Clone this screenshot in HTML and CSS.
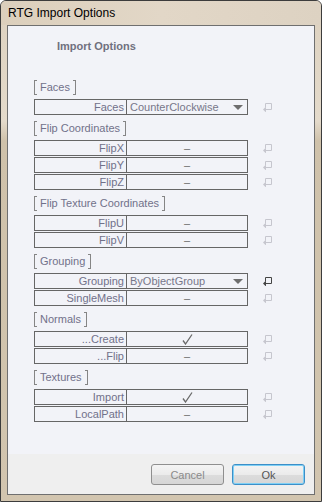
FILE: index.html
```html
<!DOCTYPE html>
<html lang="en">
<head>
  <meta charset="UTF-8">
  <title>RTG Import Options</title>
  <link rel="stylesheet" href="styles.css">
</head>
<body>
  <div class="window">
    <div class="titlebar">RTG Import Options</div>
    <div class="client">
      <div class="content">
        <div class="heading">Import Options</div>

        <div class="group">
          <div class="group-title"><span class="br-l"></span><span class="gt">Faces</span><span class="br-r"></span></div>
          <div class="row">
            <div class="field"><div class="label">Faces</div><div class="value combo">CounterClockwise<svg class="arrow" width="10" height="5" viewBox="0 0 10 5"><path d="M0 0H10L5 5Z" fill="#6e6e6e"/></svg></div></div>
            <svg class="reset" width="10" height="10" viewBox="0 0 10 10"><path d="M2.5 5V1.5H8.5V7.5H3" fill="none" stroke="currentColor"/><path d="M0 7.5L3 4.5V10.5Z" fill="currentColor"/></svg>
          </div>
        </div>

        <div class="group">
          <div class="group-title"><span class="br-l"></span><span class="gt">Flip Coordinates</span><span class="br-r"></span></div>
          <div class="row">
            <div class="field"><div class="label">FlipX</div><div class="value">–</div></div>
            <svg class="reset" width="10" height="10" viewBox="0 0 10 10"><path d="M2.5 5V1.5H8.5V7.5H3" fill="none" stroke="currentColor"/><path d="M0 7.5L3 4.5V10.5Z" fill="currentColor"/></svg>
          </div>
          <div class="row">
            <div class="field"><div class="label">FlipY</div><div class="value">–</div></div>
            <svg class="reset" width="10" height="10" viewBox="0 0 10 10"><path d="M2.5 5V1.5H8.5V7.5H3" fill="none" stroke="currentColor"/><path d="M0 7.5L3 4.5V10.5Z" fill="currentColor"/></svg>
          </div>
          <div class="row">
            <div class="field"><div class="label">FlipZ</div><div class="value">–</div></div>
            <svg class="reset" width="10" height="10" viewBox="0 0 10 10"><path d="M2.5 5V1.5H8.5V7.5H3" fill="none" stroke="currentColor"/><path d="M0 7.5L3 4.5V10.5Z" fill="currentColor"/></svg>
          </div>
        </div>

        <div class="group">
          <div class="group-title"><span class="br-l"></span><span class="gt">Flip Texture Coordinates</span><span class="br-r"></span></div>
          <div class="row">
            <div class="field"><div class="label">FlipU</div><div class="value">–</div></div>
            <svg class="reset" width="10" height="10" viewBox="0 0 10 10"><path d="M2.5 5V1.5H8.5V7.5H3" fill="none" stroke="currentColor"/><path d="M0 7.5L3 4.5V10.5Z" fill="currentColor"/></svg>
          </div>
          <div class="row">
            <div class="field"><div class="label">FlipV</div><div class="value">–</div></div>
            <svg class="reset" width="10" height="10" viewBox="0 0 10 10"><path d="M2.5 5V1.5H8.5V7.5H3" fill="none" stroke="currentColor"/><path d="M0 7.5L3 4.5V10.5Z" fill="currentColor"/></svg>
          </div>
        </div>

        <div class="group">
          <div class="group-title"><span class="br-l"></span><span class="gt">Grouping</span><span class="br-r"></span></div>
          <div class="row">
            <div class="field"><div class="label">Grouping</div><div class="value combo">ByObjectGroup<svg class="arrow" width="10" height="5" viewBox="0 0 10 5"><path d="M0 0H10L5 5Z" fill="#6e6e6e"/></svg></div></div>
            <svg class="reset active" width="10" height="10" viewBox="0 0 10 10"><path d="M2.5 5V1.5H8.5V7.5H3" fill="none" stroke="currentColor"/><path d="M0 7.5L3 4.5V10.5Z" fill="currentColor"/></svg>
          </div>
          <div class="row">
            <div class="field"><div class="label">SingleMesh</div><div class="value">–</div></div>
            <svg class="reset" width="10" height="10" viewBox="0 0 10 10"><path d="M2.5 5V1.5H8.5V7.5H3" fill="none" stroke="currentColor"/><path d="M0 7.5L3 4.5V10.5Z" fill="currentColor"/></svg>
          </div>
        </div>

        <div class="group">
          <div class="group-title"><span class="br-l"></span><span class="gt">Normals</span><span class="br-r"></span></div>
          <div class="row">
            <div class="field"><div class="label">...Create</div><div class="value"><svg class="check" width="11" height="11" viewBox="0 0 11 11"><path d="M1 6.5L3.5 10L10 0.5" fill="none" stroke="#6a6a6a" stroke-width="1.3"/></svg></div></div>
            <svg class="reset" width="10" height="10" viewBox="0 0 10 10"><path d="M2.5 5V1.5H8.5V7.5H3" fill="none" stroke="currentColor"/><path d="M0 7.5L3 4.5V10.5Z" fill="currentColor"/></svg>
          </div>
          <div class="row">
            <div class="field"><div class="label">...Flip</div><div class="value">–</div></div>
            <svg class="reset" width="10" height="10" viewBox="0 0 10 10"><path d="M2.5 5V1.5H8.5V7.5H3" fill="none" stroke="currentColor"/><path d="M0 7.5L3 4.5V10.5Z" fill="currentColor"/></svg>
          </div>
        </div>

        <div class="group">
          <div class="group-title"><span class="br-l"></span><span class="gt">Textures</span><span class="br-r"></span></div>
          <div class="row">
            <div class="field"><div class="label">Import</div><div class="value"><svg class="check" width="11" height="11" viewBox="0 0 11 11"><path d="M1 6.5L3.5 10L10 0.5" fill="none" stroke="#6a6a6a" stroke-width="1.3"/></svg></div></div>
            <svg class="reset" width="10" height="10" viewBox="0 0 10 10"><path d="M2.5 5V1.5H8.5V7.5H3" fill="none" stroke="currentColor"/><path d="M0 7.5L3 4.5V10.5Z" fill="currentColor"/></svg>
          </div>
          <div class="row">
            <div class="field"><div class="label">LocalPath</div><div class="value">–</div></div>
            <svg class="reset" width="10" height="10" viewBox="0 0 10 10"><path d="M2.5 5V1.5H8.5V7.5H3" fill="none" stroke="currentColor"/><path d="M0 7.5L3 4.5V10.5Z" fill="currentColor"/></svg>
          </div>
        </div>
      </div>

      <div class="buttons">
        <button class="btn">Cancel</button>
        <button class="btn default">Ok</button>
      </div>
    </div>
  </div>
</body>
</html>
```

FILE: styles.css
```css
body {
  margin: 0;
  font-family: "Liberation Sans", Arial, sans-serif;
  background: #fff;
}
.window {
  width: 322px;
  height: 502px;
  box-sizing: border-box;
  border: 1px solid #3c3c3c;
  border-radius: 6px 6px 0 0;
  background: linear-gradient(to bottom, #ddd1bf 0, #e4dacb 120px, #cfc1aa 140px, #d2c5af 100%);
  display: flex;
  flex-direction: column;
}
.titlebar {
  height: 24px;
  line-height: 24px;
  padding-left: 7px;
  font-size: 12px;
  color: #000;
  background: linear-gradient(to right, #dccfbc, #e2d7c7 50%, #ddd2c2);
  border-radius: 5px 5px 0 0;
}
.client {
  flex: 1;
  margin: 0 6px 6px 6px;
  border: 1px solid #6f6f6f;
  background: #f2f3f8;
  display: flex;
  flex-direction: column;
}
.content {
  flex: 1;
  padding-left: 26px;
}
.heading {
  margin-top: 13px;
  margin-left: 23px;
  line-height: 14px;
  font-size: 11px;
  font-weight: bold;
  color: #70707e;
  margin-bottom: 27px;
}
.group {
  margin-bottom: 6px;
}
.group-title {
  display: flex;
  height: 15px;
  margin-bottom: 4px;
}
.br-l, .br-r {
  width: 3px;
  box-sizing: border-box;
  border: 1px solid #858585;
}
.br-l {
  border-right: none;
}
.br-r {
  border-left: none;
}
.gt {
  line-height: 15px;
  font-size: 11px;
  color: #71718a;
  padding: 0 3px;
}
.row {
  display: flex;
  align-items: center;
  margin-bottom: 1px;
}
.field {
  display: flex;
  width: 214px;
  height: 16px;
  box-sizing: border-box;
  border: 1px solid #666;
  font-size: 11px;
  line-height: 14px;
  color: #71718a;
}
.label {
  width: 92px;
  box-sizing: border-box;
  border-right: 1px solid #666;
  text-align: right;
  padding-right: 2px;
}
.value {
  flex: 1;
  display: flex;
  justify-content: center;
  align-items: center;
  color: #6a6a6a;
}
.value.combo {
  justify-content: space-between;
  padding: 0 4px 0 3px;
  color: #77778a;
}
.arrow {
  display: block;
}
.check {
  display: block;
}
.reset {
  margin-left: 15px;
  color: #c6c6ce;
}
.reset.active {
  color: #444;
}
.buttons {
  height: 40px;
  background: #efefef;
  display: flex;
  justify-content: flex-end;
  align-items: center;
  gap: 8px;
  padding-right: 9px;
  padding-top: 1px;
  box-sizing: border-box;
}
.btn {
  width: 73px;
  height: 21px;
  font-family: "Liberation Sans", Arial, sans-serif;
  font-size: 11px;
  color: #8a8a8a;
  border: 1px solid #8f8f8f;
  border-radius: 3px;
  background: linear-gradient(to bottom, #f4f4f4 0, #ebebeb 50%, #dcdcdc 51%, #d6d6d6 100%);
  padding: 0;
}
.btn.default {
  border-color: #3c8fc8;
  box-shadow: inset 0 0 0 1px #7fd0f5;
  color: #555;
}
```
